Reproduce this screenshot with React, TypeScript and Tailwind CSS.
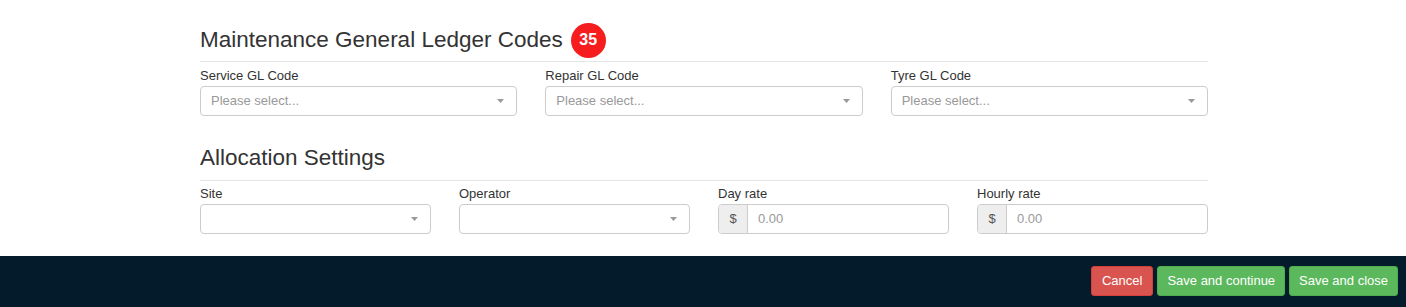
import React from "react";

function Caret() {
  return (
    <svg width="7" height="4" viewBox="0 0 7 4" className="shrink-0">
      <path d="M0 0 H7 L3.5 4 Z" fill="#999" />
    </svg>
  );
}

function SelectField({ label, placeholder }: { label: string; placeholder?: string }) {
  return (
    <div className="flex flex-col">
      <label className="text-[13px] leading-[18px] text-[#333] mb-[1px]">{label}</label>
      <div className="h-[30px] flex items-center justify-between border border-[#ccc] rounded-[4px] bg-white pl-[10px] pr-[12px]">
        <span className="text-[13px] text-[#999]">{placeholder ?? ""}</span>
        <Caret />
      </div>
    </div>
  );
}

function MoneyField({ label }: { label: string }) {
  return (
    <div className="flex flex-col">
      <label className="text-[13px] leading-[18px] text-[#333] mb-[1px]">{label}</label>
      <div className="h-[30px] flex border border-[#ccc] rounded-[4px] bg-white overflow-hidden">
        <span className="w-[29px] flex items-center justify-center bg-[#eee] border-r border-[#ccc] text-[13px] text-[#555]">$</span>
        <span className="flex items-center pl-[10px] text-[13px] text-[#999]">0.00</span>
      </div>
    </div>
  );
}

export default function App() {
  return (
    <div className="w-[1406px] h-[307px] bg-white flex flex-col" style={{ fontFamily: '"Liberation Sans", Arial, sans-serif' }}>
      <div className="ml-[200px] w-[1008px] pt-[22px] flex-1">
        {/* Maintenance GL */}
        <div className="flex items-center gap-[8px] h-[36px] mb-[3px]">
          <h2 className="text-[22.5px] text-[#333]">Maintenance General Ledger Codes</h2>
          <span className="w-[35px] h-[35px] rounded-full bg-[#f51d1d] text-white font-bold text-[16px] flex items-center justify-center">35</span>
        </div>
        <div className="border-t border-[#e5e5e5] pt-[5px] grid grid-cols-3 gap-x-[28px]">
          <SelectField label="Service GL Code" placeholder="Please select..." />
          <SelectField label="Repair GL Code" placeholder="Please select..." />
          <SelectField label="Tyre GL Code" placeholder="Please select..." />
        </div>

        {/* Allocation */}
        <div className="flex items-center h-[36px] mt-[24px] mb-[4px]">
          <h2 className="text-[22.5px] text-[#333]">Allocation Settings</h2>
        </div>
        <div className="border-t border-[#e5e5e5] pt-[4px] grid grid-cols-4 gap-x-[28px]">
          <SelectField label="Site" />
          <SelectField label="Operator" />
          <MoneyField label="Day rate" />
          <MoneyField label="Hourly rate" />
        </div>
      </div>

      <div className="h-[51px] bg-[#031b2a] flex justify-end items-start pt-[10px] pr-[8px] gap-[4px]">
        <button className="h-[30px] px-[10px] rounded-[3px] bg-[#d9534f] border border-[#d43f3a] text-white text-[13px]">Cancel</button>
        <button className="h-[30px] px-[9px] rounded-[3px] bg-[#5cb85c] border border-[#4cae4c] text-white text-[13px]">Save and continue</button>
        <button className="h-[30px] px-[9px] rounded-[3px] bg-[#5cb85c] border border-[#4cae4c] text-white text-[13px]">Save and close</button>
      </div>
    </div>
  );
}
